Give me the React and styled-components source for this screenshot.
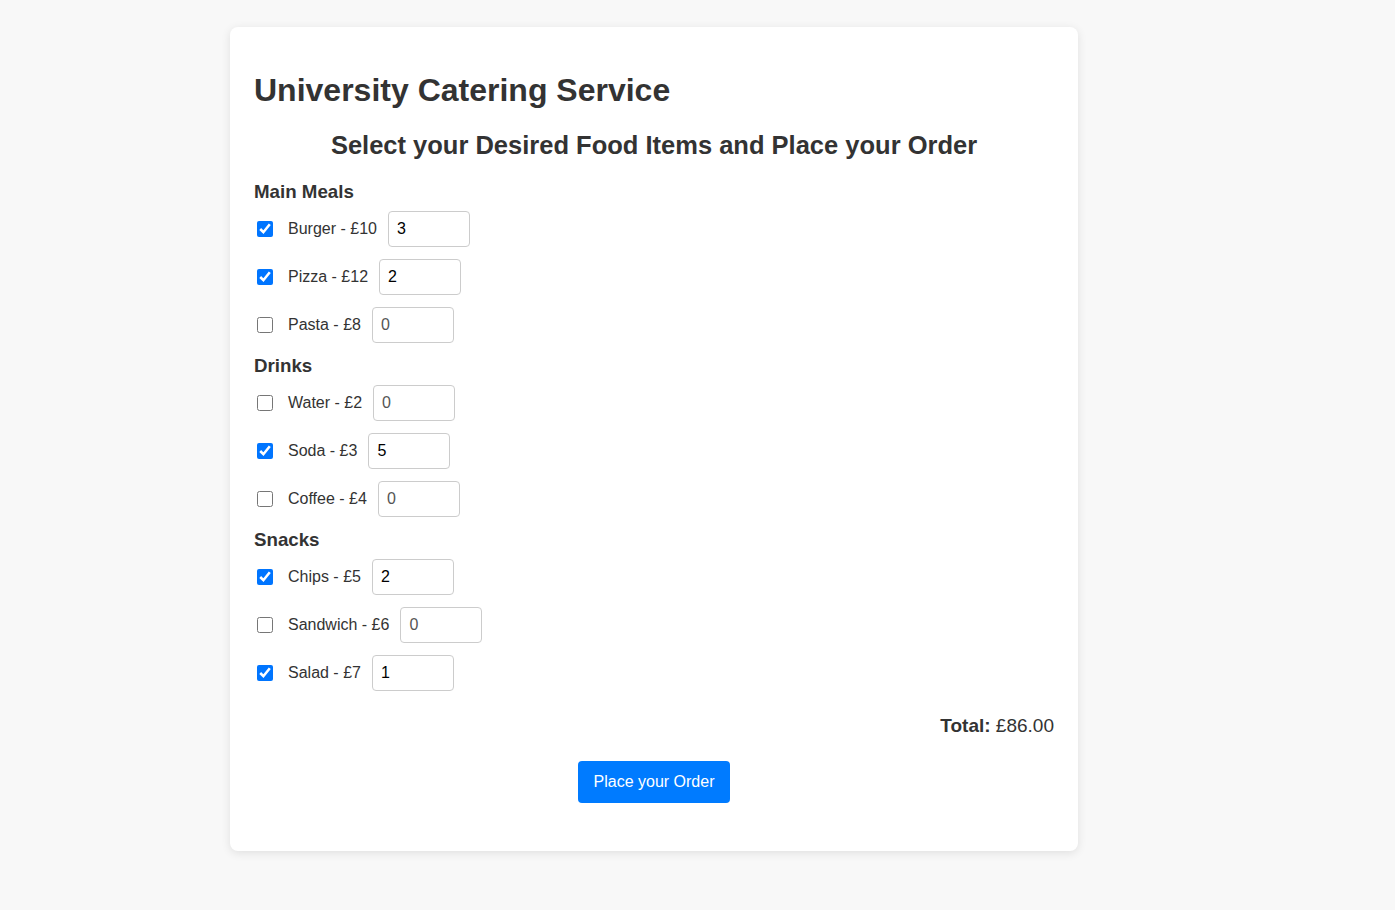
import React, { useState } from "react";
import styled, { createGlobalStyle } from "styled-components";

const Global = createGlobalStyle`
  html, body { margin: 0; padding: 0; background: #f8f8f8; }
  body { font-family: "Liberation Sans", Arial, sans-serif; color: #333; }
`;

const Page = styled.div`
  padding: 27px 0 40px 230px;
`;

const Card = styled.div`
  width: 800px;
  padding: 24px;
  background: #fff;
  border-radius: 8px;
  box-shadow: 0 2px 10px rgba(0, 0, 0, 0.1);
`;

const Title = styled.h1`
  font-size: 32px;
  font-weight: bold;
  margin: 21px 0 0;
  color: #333;
`;

const Subtitle = styled.h2`
  font-size: 25.5px;
  font-weight: bold;
  text-align: center;
  margin: 22px 0 21px;
  color: #333;
`;

const Section = styled.h3`
  font-size: 18.72px;
  font-weight: bold;
  margin: 11px 0 8px;
  color: #333;
`;

const Row = styled.div`
  display: flex;
  align-items: center;
  margin-bottom: 12px;
`;

const Check = styled.input`
  width: 16px;
  height: 16px;
  margin: 0 0 0 3px;
`;

const Label = styled.label`
  font-size: 16px;
  color: #333;
  margin: 0 11px 0 15px;
`;

const Qty = styled.input`
  box-sizing: border-box;
  width: 82px;
  height: 36px;
  padding: 0 8px;
  border: 1px solid #ccc;
  border-radius: 4px;
  font-family: "Liberation Sans", Arial, sans-serif;
  font-size: 16px;
  color: ${(p) => (p.$zero ? "#555" : "#000")};
  outline: none;
`;

const Total = styled.div`
  text-align: right;
  font-size: 19px;
  margin-top: 24px;
  b { font-weight: bold; }
`;

const Actions = styled.div`
  display: flex;
  justify-content: center;
  margin-top: 24px;
  margin-bottom: 24px;
`;

const Button = styled.button`
  background: #007bff;
  color: #fff;
  border: none;
  border-radius: 4px;
  padding: 12px 16px;
  font-family: "Liberation Sans", Arial, sans-serif;
  font-size: 16px;
  cursor: pointer;
`;

const sections = [
  {
    name: "Main Meals",
    items: [
      { name: "Burger", price: 10, qty: 3, on: true },
      { name: "Pizza", price: 12, qty: 2, on: true },
      { name: "Pasta", price: 8, qty: 0, on: false },
    ],
  },
  {
    name: "Drinks",
    items: [
      { name: "Water", price: 2, qty: 0, on: false },
      { name: "Soda", price: 3, qty: 5, on: true },
      { name: "Coffee", price: 4, qty: 0, on: false },
    ],
  },
  {
    name: "Snacks",
    items: [
      { name: "Chips", price: 5, qty: 2, on: true },
      { name: "Sandwich", price: 6, qty: 0, on: false },
      { name: "Salad", price: 7, qty: 1, on: true },
    ],
  },
];

export default function App() {
  const [data, setData] = useState(sections);

  const update = (si, ii, patch) => {
    setData((d) =>
      d.map((s, a) =>
        a !== si
          ? s
          : { ...s, items: s.items.map((it, b) => (b !== ii ? it : { ...it, ...patch })) }
      )
    );
  };

  const total = data.reduce(
    (sum, s) => sum + s.items.reduce((t, it) => t + (it.on ? it.price * it.qty : 0), 0),
    0
  );

  return (
    <>
      <Global />
      <Page>
        <Card>
          <Title>University Catering Service</Title>
          <Subtitle>Select your Desired Food Items and Place your Order</Subtitle>
          {data.map((s, si) => (
            <div key={s.name}>
              <Section>{s.name}</Section>
              {s.items.map((it, ii) => (
                <Row key={it.name}>
                  <Check
                    type="checkbox"
                    checked={it.on}
                    onChange={(e) => update(si, ii, { on: e.target.checked })}
                  />
                  <Label>
                    {it.name} - £{it.price}
                  </Label>
                  <Qty
                    type="text"
                    $zero={it.qty === 0}
                    value={it.qty}
                    onChange={(e) => update(si, ii, { qty: Number(e.target.value) || 0 })}
                  />
                </Row>
              ))}
            </div>
          ))}
          <Total>
            <b>Total:</b> £{total.toFixed(2)}
          </Total>
          <Actions>
            <Button>Place your Order</Button>
          </Actions>
        </Card>
      </Page>
    </>
  );
}
